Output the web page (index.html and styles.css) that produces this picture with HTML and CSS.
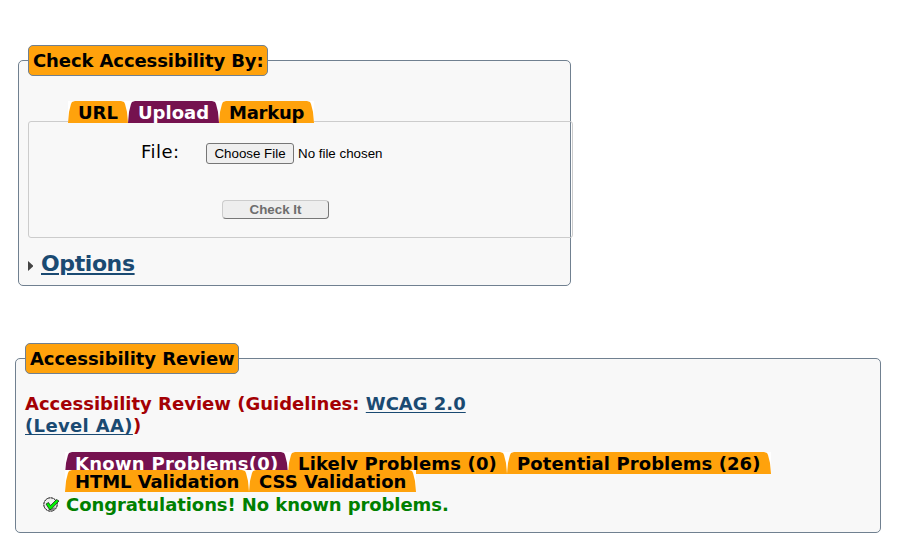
FILE: index.html
```html
<!DOCTYPE html>
<html lang="en">
<head>
<meta charset="utf-8">
<title>Accessibility Checker</title>
<link rel="stylesheet" href="styles.css">
</head>
<body>
<fieldset class="panel checker">
  <legend><span class="t-check">Check Accessibility By:</span></legend>
  <div class="tabs">
    <a class="tab w-url"><span>URL</span></a><a class="tab active w-upload"><span>Upload</span></a><a class="tab w-markup"><span>Markup</span></a>
  </div>
  <div class="form">
    <div class="file-row">
      <span class="label">File:</span>
      <button class="choose">Choose File</button>
      <span class="nofile">No file chosen</span>
    </div>
    <button class="submit">Check It</button>
  </div>
  <h2 class="options"><svg width="5" height="10" viewBox="0 0 5 10"><path d="M0 0L5 4.5V5.5L0 10Z" fill="#444"/></svg><a href="#">Options</a></h2>
</fieldset>
<fieldset class="panel review">
  <legend><span class="t-review">Accessibility Review</span></legend>
  <h3><span class="t-guide">Accessibility Review (Guidelines: <a href="#">WCAG 2.0</a></span><br><span class="t-level"><a href="#">(Level AA)</a>)</span></h3>
  <div class="tabs first">
    <a class="tab active w-known"><span>Known Problems(0)</span></a><a class="tab w-likely"><span>Likely Problems (0)</span></a><a class="tab w-potential"><span>Potential Problems (26)</span></a>
  </div>
  <div class="tabs second">
    <a class="tab w-html"><span>HTML Validation</span></a><a class="tab w-css"><span>CSS Validation</span></a>
  </div>
  <div class="congrats">
    <svg width="17" height="15" viewBox="0 0 17 15"><circle cx="7.5" cy="7.5" r="6.7" fill="#eee" stroke="#111" stroke-dasharray="3 .5"/><path d="M5 12.5L13 10L14 6L12 12.5L8 14Z" fill="#888"/><path d="M3 7L5.5 5.5L7.5 8.5L13.5 2.5L16 4L8 12.5H6.5Z" fill="#00f000" stroke="#151515" stroke-width=".7"/></svg>
    <span>Congratulations! No known problems.</span>
  </div>
</fieldset>
</body>
</html>
```
FILE: styles.css
```css
* { box-sizing: border-box; }
body {
  margin: 0;
  padding: 45px 0 0;
  background: #fff;
  color: #000;
  font: 18px/22px Verdana, "DejaVu Sans", sans-serif;
}
a { color: #1a4a72; }
.panel {
  min-width: 0;
  padding: 0;
  border: 1px solid #708090;
  border-radius: 5px;
  background: #f8f8f8;
}
legend {
  height: 31px;
  padding: 4px;
  border: 1px solid #708090;
  border-radius: 5px;
  background: #ffa20c;
  font-weight: bold;
  white-space: nowrap;
}
.t-check { letter-spacing: -.1px; }
.t-review { letter-spacing: -.06px; }
.t-level { letter-spacing: .35px; }
.checker { width: 553px; height: 241px; margin: 0 0 0 18px; }
.checker legend { width: 240px; margin-left: 9px; }
.review { width: 866px; height: 190px; margin: 57px 0 0 15px; }
.review legend { width: 214px; margin-left: 9px; }
.tabs { display: flex; position: relative; height: 22px; }
.checker .tabs { margin: 25px 0 0 49px; z-index: 1; }
.tab {
  position: relative;
  height: 22px;
  padding-left: 10px;
  background: #fff;
  color: #000;
  font-weight: bold;
  line-height: 24px;
  white-space: nowrap;
}
.tab::before {
  content: "";
  position: absolute;
  inset: 0;
  background: #ffa20c;
  clip-path: polygon(0 100%, 1px 50%, 3px 3px, 4px 1px, 7px 0, calc(100% - 7px) 0, calc(100% - 4px) 1px, calc(100% - 3px) 3px, calc(100% - 1px) 50%, 100% 100%);
}
.tab.active { color: #fff; }
.tab.active::before { background: #75124f; }
.tab span { position: relative; }
.w-url { width: 60px; }
.w-upload { width: 91px; }
.w-markup { width: 95px; letter-spacing: -.25px; }
.w-known { width: 223px; letter-spacing: .27px; }
.w-likely { width: 219px; letter-spacing: .16px; }
.w-potential { width: 264px; letter-spacing: .09px; }
.w-html { width: 184px; letter-spacing: -.07px; }
.w-css { width: 167px; }
.form {
  position: relative;
  width: 545px;
  height: 117px;
  margin: -2px 0 0 9px;
  padding-top: 19px;
  border: 1px solid #ccc;
  border-radius: 3px;
}
.file-row { display: flex; align-items: center; height: 24px; margin-left: 112px; }
.label { width: 65px; margin-top: -3px; letter-spacing: .5px; }
button { padding: 0; font-family: Arial, "Liberation Sans", sans-serif; }
.choose {
  width: 88px;
  height: 21px;
  border: 1px solid #767676;
  border-radius: 3px;
  background: #efefef;
  color: #000;
  font-size: 13.333px;
}
.nofile { margin-left: 4px; font: 13.333px Arial, "Liberation Sans", sans-serif; white-space: nowrap; }
.submit {
  display: block;
  width: 107px;
  height: 19px;
  margin: 35px 0 0 193px;
  border: 1px solid;
  border-color: #ccc #777 #777 #ccc;
  border-radius: 4px;
  background: #eee;
  color: #6d6d6d;
  font-size: 13.333px;
  font-weight: bold;
  line-height: 17px;
}
.options {
  display: flex;
  align-items: center;
  height: 28px;
  margin: 12px 0 0 9px;
  font-size: 22px;
  line-height: 28px;
  letter-spacing: -.4px;
}
.options svg { margin: 4px 8px 0 0; }
.options a { text-decoration-thickness: 2px; text-underline-offset: 2px; }
h3 {
  margin: 19px 0 0 9px;
  color: #a40004;
  font-size: 18px;
  line-height: 22px;
  white-space: nowrap;
}
h3 a { text-decoration-thickness: 1px; text-underline-offset: 2px; }
.first { margin: 15px 0 0 49px; }
.second { margin: -4px 0 0 49px; }
.congrats {
  display: flex;
  align-items: center;
  height: 26px;
  margin-left: 27px;
  color: green;
  font-weight: bold;
  letter-spacing: -.08px;
  white-space: nowrap;
}
.congrats svg { margin: -2px 6px 0 0; }
```
